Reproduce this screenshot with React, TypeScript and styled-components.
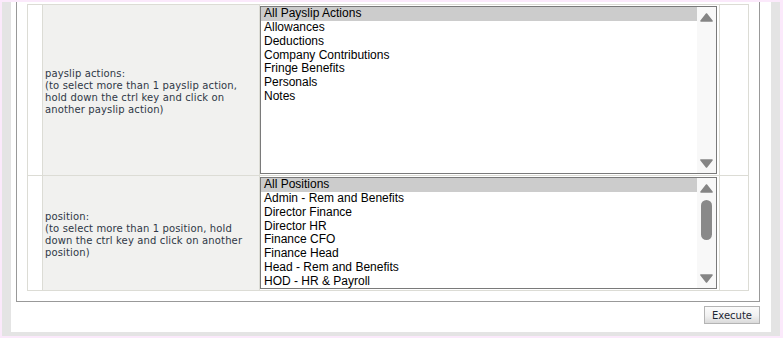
import styled, { createGlobalStyle } from 'styled-components';

const GlobalStyle = createGlobalStyle`
  html, body {
    margin: 0;
    padding: 0;
  }
  body {
    background: #fbe9fb;
    padding: 2px 3px 2px 2px;
    font-family: "DejaVu Sans", Verdana, sans-serif;
  }
`;

const Frame = styled.div`
  background: #e4e4e4;
  padding: 0 9px 4px 9px;
`;

const Panel = styled.div`
  background: #ffffff;
  padding: 0 11px 8px 5px;
`;

const FormBox = styled.div`
  border: 1px solid #999999;
  border-top: none;
  padding: 2px 10px 10px 10px;
`;

const FormTable = styled.div`
  display: grid;
  grid-template-columns: 14px 216px 459px 28px;
  grid-template-rows: 170px 114px;
  gap: 1px;
  background: #dcdcd5;
  border: 1px solid #dcdcd5;
`;

const Cell = styled.div`
  background: #ffffff;
`;

const LabelCell = styled.div`
  background: #f1f1ef;
  display: flex;
  align-items: center;
  padding: 4px 2px 0;
  font-size: 10px;
  line-height: 12px;
  letter-spacing: 0.13px;
  color: #2f3846;
`;

const FieldCell = styled.div`
  background: #ffffff;
  padding: 1px 2px 1px 0;
`;

const ListBox = styled.div<{ $height: number }>`
  height: ${(p) => p.$height}px;
  box-sizing: border-box;
  border: 1px solid #7a7a7a;
  display: flex;
`;

const Items = styled.div`
  flex: 1;
  overflow: hidden;
  font-family: "Liberation Sans", Arial, sans-serif;
  font-size: 12px;
  color: #000000;
`;

const Item = styled.div<{ $selected?: boolean }>`
  height: 13.85px;
  line-height: 13px;
  padding-left: 3px;
  white-space: nowrap;
  background: ${(p) => (p.$selected ? '#cccccc' : 'transparent')};
`;

const Track = styled.div`
  width: 19px;
  background: #f8f8f8;
  display: flex;
  flex-direction: column;
  align-items: center;
  padding: 6px 0 5px;
  box-sizing: border-box;
`;

const Thumb = styled.div`
  width: 11px;
  height: 40px;
  margin-top: 7px;
  border-radius: 6px;
  background: #898989;
`;

const Spacer = styled.div`
  flex: 1;
`;

const ButtonRow = styled.div`
  display: flex;
  justify-content: flex-end;
  margin-top: 4px;
`;

const Button = styled.button`
  width: 56px;
  height: 18px;
  padding: 0;
  border: 1px solid #b4b4b4;
  background: linear-gradient(#fbfbfb, #f1f1f1 55%, #dadada);
  font-family: "DejaVu Sans", Verdana, sans-serif;
  font-size: 10px;
  color: #1c2633;
  cursor: pointer;
`;

const Arrow = ({ down }: { down?: boolean }) => (
  <svg width="13" height="9" viewBox="0 0 13 9">
    <path
      d={down ? 'M1 1 L12 1 L6.5 8 Z' : 'M6.5 1 L12 8 L1 8 Z'}
      fill="#858585"
      stroke="#858585"
      strokeWidth="1.6"
      strokeLinejoin="round"
    />
  </svg>
);

interface ListProps {
  items: string[];
  height: number;
  scrollable?: boolean;
}

const List = ({ items, height, scrollable }: ListProps) => (
  <ListBox $height={height}>
    <Items>
      {items.map((item, i) => (
        <Item key={item} $selected={i === 0}>
          {item}
        </Item>
      ))}
    </Items>
    <Track>
      <Arrow />
      {scrollable && <Thumb />}
      <Spacer />
      <Arrow down />
    </Track>
  </ListBox>
);

const payslipActions = [
  'All Payslip Actions',
  'Allowances',
  'Deductions',
  'Company Contributions',
  'Fringe Benefits',
  'Personals',
  'Notes',
];

const positions = [
  'All Positions',
  'Admin - Rem and Benefits',
  'Director Finance',
  'Director HR',
  'Finance CFO',
  'Finance Head',
  'Head - Rem and Benefits',
  'HOD - HR & Payroll',
];

export default function App() {
  return (
    <>
      <GlobalStyle />
      <Frame>
        <Panel>
          <FormBox>
            <FormTable>
              <Cell />
              <LabelCell>
                <div>
                  payslip actions:
                  <br />
                  (to select more than 1 payslip action, hold down the ctrl key and click on
                  another payslip action)
                </div>
              </LabelCell>
              <FieldCell>
                <List items={payslipActions} height={168} />
              </FieldCell>
              <Cell />

              <Cell />
              <LabelCell>
                <div>
                  position:
                  <br />
                  (to select more than 1 position, hold down the ctrl key and click on another
                  position)
                </div>
              </LabelCell>
              <FieldCell>
                <List items={positions} height={112} scrollable />
              </FieldCell>
              <Cell />
            </FormTable>
          </FormBox>
          <ButtonRow>
            <Button>Execute</Button>
          </ButtonRow>
        </Panel>
      </Frame>
    </>
  );
}
